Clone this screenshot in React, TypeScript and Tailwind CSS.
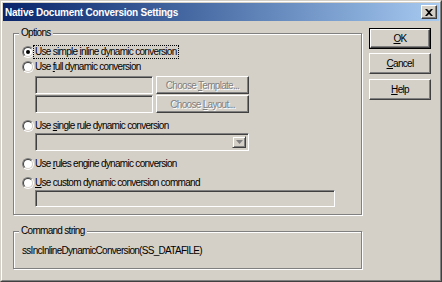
import React from 'react';

const font = "font-['Liberation_Sans',Arial,sans-serif]";

function Radio({ checked }: { checked?: boolean }) {
  return (
    <div className="w-[12px] h-[12px] rounded-full border border-t-[#808080] border-l-[#808080] border-b-white border-r-white shrink-0">
      <div className="w-full h-full rounded-full border border-t-[#404040] border-l-[#404040] border-b-[#D4D0C8] border-r-[#D4D0C8] bg-white flex items-center justify-center">
        {checked && <div className="w-[4px] h-[4px] rounded-full bg-black" />}
      </div>
    </div>
  );
}

function U({ children }: { children: React.ReactNode }) {
  return <span className="underline underline-offset-[1px]">{children}</span>;
}

function RadioRow({
  checked,
  focus,
  children,
  className = '',
}: {
  checked?: boolean;
  focus?: boolean;
  children: React.ReactNode;
  className?: string;
}) {
  return (
    <div className={`flex items-center h-[13px] ${className}`}>
      <Radio checked={checked} />
      <span
        className={`ml-[-1px] pl-[1px] pr-[1px] h-[14px] leading-[12px] border ${
          focus ? 'border-dotted border-black' : 'border-transparent'
        }`}
      >
        {children}
      </span>
    </div>
  );
}

function Sunken({ className = '', children }: { className?: string; children?: React.ReactNode }) {
  return (
    <div
      className={`border border-t-[#808080] border-l-[#808080] border-b-white border-r-white shadow-[inset_1px_1px_0_#404040,inset_-1px_-1px_0_#D4D0C8] bg-[#D4D0C8] ${className}`}
    >
      {children}
    </div>
  );
}

function DisabledButton({ children, className = '' }: { children: React.ReactNode; className?: string }) {
  return (
    <div
      className={`border border-t-white border-l-white border-b-[#404040] border-r-[#404040] shadow-[inset_-1px_-1px_0_#808080] flex items-center justify-center text-[#808080] [text-shadow:1px_1px_0_#fff] ${className}`}
    >
      <span>{children}</span>
    </div>
  );
}

function Button({ children, isDefault }: { children: React.ReactNode; isDefault?: boolean }) {
  return (
    <div className={`w-[62px] h-[21px] ${isDefault ? 'border border-black' : ''}`}>
      <div className="w-full h-full border border-t-white border-l-white border-b-[#404040] border-r-[#404040] shadow-[inset_-1px_-1px_0_#808080] flex items-center justify-center text-black">
        <span>{children}</span>
      </div>
    </div>
  );
}

function Group({
  label,
  className = '',
  children,
}: {
  label: string;
  className?: string;
  children?: React.ReactNode;
}) {
  return (
    <div
      className={`relative border border-[#808080] shadow-[inset_1px_1px_0_#fff,1px_1px_0_#fff] ${className}`}
    >
      <span className="absolute top-[-7px] left-[5px] px-[2px] bg-[#D4D0C8] leading-[12px] text-black">
        {label}
      </span>
      {children}
    </div>
  );
}

export default function App() {
  return (
    <div
      className={`w-[442px] h-[282px] bg-[#D4D0C8] border border-t-[#D4D0C8] border-l-[#D4D0C8] border-b-[#404040] border-r-[#404040] text-[10px] tracking-[-0.7px] text-black ${font}`}
    >
      <div className="w-full h-full border border-t-white border-l-white border-b-[#808080] border-r-[#808080] p-[1px] flex flex-col">
        {/* title bar */}
        <div className="h-[18px] flex items-center bg-gradient-to-r from-[#0A246A] to-[#A6CAF0] pl-[2px] pr-[2px]">
          <span className="text-white font-bold text-[10px] tracking-[-0.25px] flex-1">
            Native Document Conversion Settings
          </span>
          <div className="w-[16px] h-[14px] bg-[#D4D0C8] border border-t-white border-l-white border-b-[#404040] border-r-[#404040] shadow-[inset_-1px_-1px_0_#808080] flex items-center justify-center">
            <svg width="8" height="7" viewBox="0 0 8 7">
              <path d="M0 0h2l2 2 2-2h2L5 3.5 8 7H6L4 5 2 7H0l3-3.5z" fill="#000" />
            </svg>
          </div>
        </div>

        {/* body */}
        <div className="flex flex-1">
          <div className="ml-[10px] w-[349px] flex flex-col">
            <Group label="Options" className="mt-[12px] h-[182px] pl-[8px] pt-[11px] flex flex-col">
              <RadioRow checked focus>
                Use simple <U>i</U>nline dynamic conversion
              </RadioRow>
              <RadioRow className="mt-[2px]">
                Use <U>f</U>ull dynamic conversion
              </RadioRow>
              <div className="flex mt-[3px] ml-[13px] h-[18px]">
                <Sunken className="w-[118px] h-[18px]" />
                <DisabledButton className="ml-[3px] w-[93px] h-[18px]">
                  Choose <U>T</U>emplate...
                </DisabledButton>
              </div>
              <div className="flex mt-[1px] ml-[13px] h-[18px]">
                <Sunken className="w-[118px] h-[18px]" />
                <DisabledButton className="ml-[3px] w-[93px] h-[18px]">
                  Choose <U>L</U>ayout...
                </DisabledButton>
              </div>
              <RadioRow className="mt-[6px]">
                Use <U>s</U>ingle rule dynamic conversion
              </RadioRow>
              <div className="ml-[13px] mt-[1px]">
                <Sunken className="w-[214px] h-[18px] flex justify-end p-[2px]">
                  <div className="w-[14px] h-full border border-t-[#D4D0C8] border-l-[#D4D0C8] border-b-[#404040] border-r-[#404040] shadow-[inset_1px_1px_0_#fff,inset_-1px_-1px_0_#808080] flex items-center justify-center">
                    <svg width="7" height="4" viewBox="0 0 7 4">
                      <path d="M0 0h7L3.5 4z" fill="#808080" />
                    </svg>
                  </div>
                </Sunken>
              </div>
              <RadioRow className="mt-[6px]">
                Use <U>r</U>ules engine dynamic conversion
              </RadioRow>
              <RadioRow className="mt-[6px]">
                <U>U</U>se custom dynamic conversion command
              </RadioRow>
              <Sunken className="ml-[13px] mt-[1px] w-[300px] h-[17px]" />
            </Group>

            <Group label="Command string" className="mt-[16px] h-[38px] pl-[8px] pt-[13px]">
              <div className="leading-[12px]">ssIncInlineDynamicConversion(SS_DATAFILE)</div>
            </Group>
          </div>

          <div className="ml-[7px] mt-[7px] flex flex-col gap-[4px]">
            <Button isDefault>
              <U>O</U>K
            </Button>
            <Button>
              <U>C</U>ancel
            </Button>
            <div className="mt-[1px]">
              <Button>
                <U>H</U>elp
              </Button>
            </div>
          </div>
        </div>
      </div>
    </div>
  );
}
